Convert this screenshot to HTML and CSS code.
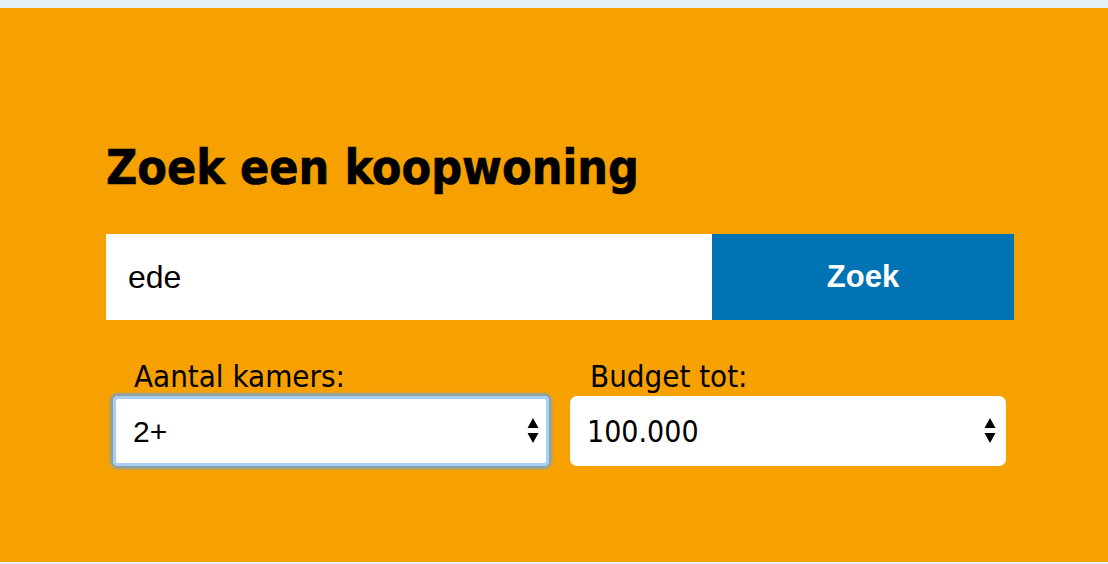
FILE: index.html
```html
<!DOCTYPE html>
<html lang="nl">
<head>
<meta charset="utf-8">
<title>Zoek een koopwoning</title>
<link rel="stylesheet" href="styles.css">
</head>
<body>
<main class="search">
  <h1 class="title">Zoek een koopwoning</h1>
  <form class="bar" onsubmit="return false">
    <input class="query" type="text" value="ede">
    <button class="submit" type="submit">Zoek</button>
  </form>
  <div class="filters">
    <div class="field">
      <label class="label" for="kamers">Aantal kamers:</label>
      <div class="select select-focus">
        <select id="kamers" class="control control-sans">
          <option>2+</option>
        </select>
        <svg class="arrows" width="12" height="26" viewBox="0 0 12 26"><path d="M6 0 L11.5 10 L0.5 10 Z M0.5 15 L11.5 15 L6 25 Z" fill="#000"/></svg>
      </div>
    </div>
    <div class="field field-right">
      <label class="label" for="budget">Budget tot:</label>
      <div class="select">
        <select id="budget" class="control">
          <option>100.000</option>
        </select>
        <svg class="arrows" width="12" height="26" viewBox="0 0 12 26"><path d="M6 0 L11.5 10 L0.5 10 Z M0.5 15 L11.5 15 L6 25 Z" fill="#000"/></svg>
      </div>
    </div>
  </div>
</main>
</body>
</html>
```

FILE: styles.css
```css
html {
  background: #e6f1f8;
}
body {
  margin: 0;
  padding-top: 8px;
  font-family: "DejaVu Sans Condensed", "DejaVu Sans", sans-serif;
}
.search {
  box-sizing: border-box;
  height: 554px;
  background: #f7a100;
  padding: 135px 0 0 106px;
}
.title {
  margin: 0 0 43px;
  font-size: 48px;
  line-height: 1;
  font-weight: bold;
  color: #000;
  -webkit-text-stroke: 0.6px #000;
}
.bar {
  display: flex;
  width: 908px;
  height: 86px;
  margin: 0;
}
.query {
  box-sizing: border-box;
  width: 606px;
  height: 86px;
  border: 0;
  outline: none;
  padding: 0 0 0 22px;
  margin: 0;
  background: #fff;
  font-family: "Liberation Sans", Arial, sans-serif;
  font-size: 32px;
  color: #000;
}
.submit {
  width: 302px;
  height: 86px;
  border: 0;
  margin: 0;
  background: #0073b5;
  color: #fff;
  font-family: "Liberation Sans", Arial, sans-serif;
  font-weight: bold;
  font-size: 31px;
  padding: 0;
}
.filters {
  display: grid;
  grid-template-columns: 436px 436px;
  column-gap: 21px;
  padding-left: 7px;
  margin-top: 41px;
}
.field {
  display: flex;
  flex-direction: column;
}
.label {
  font-size: 31px;
  line-height: 1;
  height: 31px;
  padding-left: 21px;
  margin-bottom: 4px;
  color: #000;
}
.field-right .label {
  padding-left: 20px;
}
.select {
  position: relative;
  box-sizing: border-box;
  height: 70px;
  background: #fff;
  border-radius: 7px;
}
.select-focus {
  border-radius: 5px;
  box-shadow: inset 0 0 0 3px #a9cef5, 0 0 2px 3px #8aa3a8;
}
.control {
  -webkit-appearance: none;
  appearance: none;
  width: 100%;
  height: 100%;
  border: 0;
  outline: none;
  background: transparent;
  padding: 0 0 0 17px;
  margin: 0;
  font-family: "DejaVu Sans Condensed", "DejaVu Sans", sans-serif;
  font-size: 30px;
  color: #000;
}
.control-sans {
  font-family: "Liberation Sans", Arial, sans-serif;
  padding-left: 20px;
}
.arrows {
  position: absolute;
  right: 10px;
  top: 22px;
  pointer-events: none;
}
```
